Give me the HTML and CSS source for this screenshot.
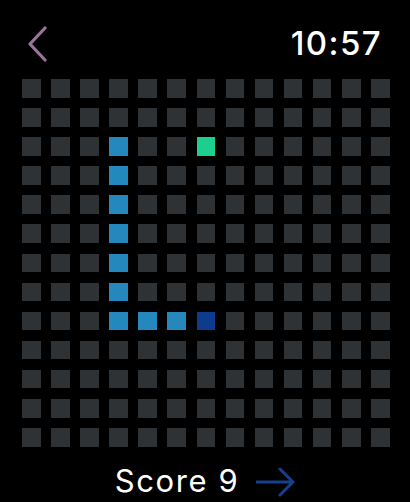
FILE: index.html
```html
<!DOCTYPE html>
<html lang="en">
<head>
    <meta charset="UTF-8">
    <meta name="viewport" content="width=device-width, initial-scale=1.0">
    <title>Snake</title>
    <link rel="stylesheet" href="styles.css">
</head>
<body>

    <div class="screen">
        <div class="header">
            <svg class="back" width="22" height="36" viewBox="0 0 22 36">
                <path d="M18 2 L3 18 L18 34" fill="none" stroke="#9b7498" stroke-width="3.2" stroke-linecap="round" stroke-linejoin="round"/>
            </svg>
            <div class="time">10:57</div>
        </div>

        <!-- 13 x 13 board -->
        <div class="board">
            <div class="cell"></div><div class="cell"></div><div class="cell"></div><div class="cell"></div><div class="cell"></div><div class="cell"></div><div class="cell"></div><div class="cell"></div><div class="cell"></div><div class="cell"></div><div class="cell"></div><div class="cell"></div><div class="cell"></div>
            <div class="cell"></div><div class="cell"></div><div class="cell"></div><div class="cell"></div><div class="cell"></div><div class="cell"></div><div class="cell"></div><div class="cell"></div><div class="cell"></div><div class="cell"></div><div class="cell"></div><div class="cell"></div><div class="cell"></div>
            <div class="cell"></div><div class="cell"></div><div class="cell"></div><div class="cell snake"></div><div class="cell"></div><div class="cell"></div><div class="cell food"></div><div class="cell"></div><div class="cell"></div><div class="cell"></div><div class="cell"></div><div class="cell"></div><div class="cell"></div>
            <div class="cell"></div><div class="cell"></div><div class="cell"></div><div class="cell snake"></div><div class="cell"></div><div class="cell"></div><div class="cell"></div><div class="cell"></div><div class="cell"></div><div class="cell"></div><div class="cell"></div><div class="cell"></div><div class="cell"></div>
            <div class="cell"></div><div class="cell"></div><div class="cell"></div><div class="cell snake"></div><div class="cell"></div><div class="cell"></div><div class="cell"></div><div class="cell"></div><div class="cell"></div><div class="cell"></div><div class="cell"></div><div class="cell"></div><div class="cell"></div>
            <div class="cell"></div><div class="cell"></div><div class="cell"></div><div class="cell snake"></div><div class="cell"></div><div class="cell"></div><div class="cell"></div><div class="cell"></div><div class="cell"></div><div class="cell"></div><div class="cell"></div><div class="cell"></div><div class="cell"></div>
            <div class="cell"></div><div class="cell"></div><div class="cell"></div><div class="cell snake"></div><div class="cell"></div><div class="cell"></div><div class="cell"></div><div class="cell"></div><div class="cell"></div><div class="cell"></div><div class="cell"></div><div class="cell"></div><div class="cell"></div>
            <div class="cell"></div><div class="cell"></div><div class="cell"></div><div class="cell snake"></div><div class="cell"></div><div class="cell"></div><div class="cell"></div><div class="cell"></div><div class="cell"></div><div class="cell"></div><div class="cell"></div><div class="cell"></div><div class="cell"></div>
            <div class="cell"></div><div class="cell"></div><div class="cell"></div><div class="cell snake"></div><div class="cell snake"></div><div class="cell snake"></div><div class="cell head"></div><div class="cell"></div><div class="cell"></div><div class="cell"></div><div class="cell"></div><div class="cell"></div><div class="cell"></div>
            <div class="cell"></div><div class="cell"></div><div class="cell"></div><div class="cell"></div><div class="cell"></div><div class="cell"></div><div class="cell"></div><div class="cell"></div><div class="cell"></div><div class="cell"></div><div class="cell"></div><div class="cell"></div><div class="cell"></div>
            <div class="cell"></div><div class="cell"></div><div class="cell"></div><div class="cell"></div><div class="cell"></div><div class="cell"></div><div class="cell"></div><div class="cell"></div><div class="cell"></div><div class="cell"></div><div class="cell"></div><div class="cell"></div><div class="cell"></div>
            <div class="cell"></div><div class="cell"></div><div class="cell"></div><div class="cell"></div><div class="cell"></div><div class="cell"></div><div class="cell"></div><div class="cell"></div><div class="cell"></div><div class="cell"></div><div class="cell"></div><div class="cell"></div><div class="cell"></div>
            <div class="cell"></div><div class="cell"></div><div class="cell"></div><div class="cell"></div><div class="cell"></div><div class="cell"></div><div class="cell"></div><div class="cell"></div><div class="cell"></div><div class="cell"></div><div class="cell"></div><div class="cell"></div><div class="cell"></div>
        </div>

        <div class="footer">
            <span class="score">Score 9</span>
            <svg class="arrow" width="40" height="32" viewBox="0 0 40 32">
                <path d="M1 16 H37 M24 3 L37 16 L24 29" fill="none" stroke="#173f8c" stroke-width="3" stroke-linecap="round" stroke-linejoin="round"/>
            </svg>
        </div>
    </div>

</body>
</html>
```

FILE: styles.css
```css
body {
    margin: 0;
    padding: 0;
    background-color: #000;
    font-family: 'Inter', 'Noto Sans', sans-serif;
    color: #fff;
}

.screen {
    width: 410px;
    height: 502px;
    display: flex;
    flex-direction: column;
}

.header {
    height: 79px;
    box-sizing: border-box;
    padding: 26px 28px 0 27px;
    display: flex;
    justify-content: space-between;
    align-items: flex-start;
}

.time {
    font-size: 33px;
    line-height: 32px;
    font-weight: 500;
    letter-spacing: 1.4px;
    margin-top: 1px;
}

.board {
    display: grid;
    grid-template-columns: repeat(13, 18.5px);
    grid-auto-rows: 18.5px;
    gap: 10.6px;
    padding-left: 22px;
}

.cell {
    background-color: #2f3234;
}

.snake {
    background-color: #2588bd;
}

.head {
    background-color: #0c3c8b;
}

.food {
    background-color: #1dcf8e;
}

.footer {
    display: flex;
    justify-content: center;
    align-items: center;
    gap: 17px;
    margin-top: 16px;
    padding-left: 1px;
}

.score {
    font-size: 31px;
    line-height: 36px;
    letter-spacing: 1.6px;
}

.arrow {
    margin-top: 2px;
}
```
